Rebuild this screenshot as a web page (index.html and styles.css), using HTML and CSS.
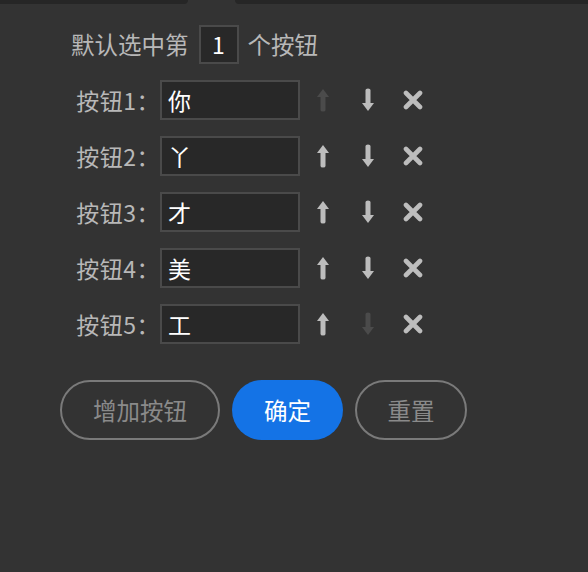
FILE: index.html
```
<!DOCTYPE html>
<html lang="zh-CN">
<head>
<meta charset="utf-8">
<title>按钮设置</title>
<link rel="stylesheet" href="styles.css">
</head>
<body>
<div class="topbar">
  <div class="tab tab-left"></div>
  <div class="tab tab-right"></div>
</div>
<div class="panel">
  <div class="default-row">
    <span>默认选中第</span>
    <span class="num-box">1</span>
    <span>个按钮</span>
  </div>
  <div class="rows">
    <div class="row">
      <span class="label">按钮1：</span>
      <span class="field">你</span>
      <span class="icon-btn disabled"><svg viewBox="0 0 12 24" width="12" height="24"><path d="M6 1 L12 9 L8.5 9 L8.5 22 Q8.5 23.5 6 23.5 Q3.5 23.5 3.5 22 L3.5 9 L0 9 Z" fill="currentColor"/></svg></span>
      <span class="icon-btn"><svg viewBox="0 0 12 24" width="12" height="24"><path d="M6 23 L12 15 L8.5 15 L8.5 2 Q8.5 0.5 6 0.5 Q3.5 0.5 3.5 2 L3.5 15 L0 15 Z" fill="currentColor"/></svg></span>
      <span class="icon-btn"><svg viewBox="0 0 20 20" width="20" height="20"><path d="M3 3 L17 17 M17 3 L3 17" stroke="currentColor" stroke-width="4.6" stroke-linecap="round"/></svg></span>
    </div>
    <div class="row">
      <span class="label">按钮2：</span>
      <span class="field">丫</span>
      <span class="icon-btn"><svg viewBox="0 0 12 24" width="12" height="24"><path d="M6 1 L12 9 L8.5 9 L8.5 22 Q8.5 23.5 6 23.5 Q3.5 23.5 3.5 22 L3.5 9 L0 9 Z" fill="currentColor"/></svg></span>
      <span class="icon-btn"><svg viewBox="0 0 12 24" width="12" height="24"><path d="M6 23 L12 15 L8.5 15 L8.5 2 Q8.5 0.5 6 0.5 Q3.5 0.5 3.5 2 L3.5 15 L0 15 Z" fill="currentColor"/></svg></span>
      <span class="icon-btn"><svg viewBox="0 0 20 20" width="20" height="20"><path d="M3 3 L17 17 M17 3 L3 17" stroke="currentColor" stroke-width="4.6" stroke-linecap="round"/></svg></span>
    </div>
    <div class="row">
      <span class="label">按钮3：</span>
      <span class="field">才</span>
      <span class="icon-btn"><svg viewBox="0 0 12 24" width="12" height="24"><path d="M6 1 L12 9 L8.5 9 L8.5 22 Q8.5 23.5 6 23.5 Q3.5 23.5 3.5 22 L3.5 9 L0 9 Z" fill="currentColor"/></svg></span>
      <span class="icon-btn"><svg viewBox="0 0 12 24" width="12" height="24"><path d="M6 23 L12 15 L8.5 15 L8.5 2 Q8.5 0.5 6 0.5 Q3.5 0.5 3.5 2 L3.5 15 L0 15 Z" fill="currentColor"/></svg></span>
      <span class="icon-btn"><svg viewBox="0 0 20 20" width="20" height="20"><path d="M3 3 L17 17 M17 3 L3 17" stroke="currentColor" stroke-width="4.6" stroke-linecap="round"/></svg></span>
    </div>
    <div class="row">
      <span class="label">按钮4：</span>
      <span class="field">美</span>
      <span class="icon-btn"><svg viewBox="0 0 12 24" width="12" height="24"><path d="M6 1 L12 9 L8.5 9 L8.5 22 Q8.5 23.5 6 23.5 Q3.5 23.5 3.5 22 L3.5 9 L0 9 Z" fill="currentColor"/></svg></span>
      <span class="icon-btn"><svg viewBox="0 0 12 24" width="12" height="24"><path d="M6 23 L12 15 L8.5 15 L8.5 2 Q8.5 0.5 6 0.5 Q3.5 0.5 3.5 2 L3.5 15 L0 15 Z" fill="currentColor"/></svg></span>
      <span class="icon-btn"><svg viewBox="0 0 20 20" width="20" height="20"><path d="M3 3 L17 17 M17 3 L3 17" stroke="currentColor" stroke-width="4.6" stroke-linecap="round"/></svg></span>
    </div>
    <div class="row">
      <span class="label">按钮5：</span>
      <span class="field">工</span>
      <span class="icon-btn"><svg viewBox="0 0 12 24" width="12" height="24"><path d="M6 1 L12 9 L8.5 9 L8.5 22 Q8.5 23.5 6 23.5 Q3.5 23.5 3.5 22 L3.5 9 L0 9 Z" fill="currentColor"/></svg></span>
      <span class="icon-btn disabled"><svg viewBox="0 0 12 24" width="12" height="24"><path d="M6 23 L12 15 L8.5 15 L8.5 2 Q8.5 0.5 6 0.5 Q3.5 0.5 3.5 2 L3.5 15 L0 15 Z" fill="currentColor"/></svg></span>
      <span class="icon-btn"><svg viewBox="0 0 20 20" width="20" height="20"><path d="M3 3 L17 17 M17 3 L3 17" stroke="currentColor" stroke-width="4.6" stroke-linecap="round"/></svg></span>
    </div>
  </div>
  <div class="actions">
    <button class="btn btn-outline btn-add">增加按钮</button>
    <button class="btn btn-primary">确定</button>
    <button class="btn btn-outline btn-reset">重置</button>
  </div>
</div>
</body>
</html>
```
FILE: styles.css
```
html, body {
  margin: 0;
  padding: 0;
  background: #333333;
  height: 100%;
}
body {
  font-family: "Noto Sans CJK SC", "Noto Sans", sans-serif;
  color: #b8b8b8;
}
.topbar {
  display: flex;
  gap: 47px;
  height: 4px;
}
.tab {
  height: 4px;
  background: #262626;
}
.tab-left {
  width: 188px;
  border-radius: 0 0 5px 0;
}
.tab-right {
  flex: 1;
  border-radius: 0 0 0 5px;
}
.panel {
  padding: 20px 0 0 60px;
}
.default-row {
  display: flex;
  align-items: center;
  gap: 10px;
  padding-left: 11px;
  font-size: 23.5px;
  height: 40px;
}
.num-box {
  width: 36px;
  height: 35px;
  border: 2px solid #4a4a4a;
  background: #282828;
  color: #ffffff;
  display: flex;
  align-items: center;
  justify-content: center;
  font-size: 23px;
  margin-right: -1px;
}
.rows {
  display: flex;
  flex-direction: column;
  gap: 16px;
  margin-top: 16px;
}
.row {
  display: flex;
  align-items: center;
  height: 40px;
}
.label {
  width: 100px;
  text-align: right;
  font-size: 23px;
  letter-spacing: 0.5px;
}
.field {
  box-sizing: border-box;
  width: 140px;
  height: 40px;
  border: 2px solid #4a4a4a;
  background: #282828;
  color: #ffffff;
  font-size: 23px;
  padding-left: 6px;
  display: flex;
  align-items: center;
}
.icon-btn {
  width: 45px;
  height: 40px;
  display: flex;
  align-items: center;
  justify-content: center;
  color: #bdbdbd;
}
.icon-btn.disabled {
  color: #4b4b4b;
}
.actions {
  display: flex;
  gap: 12px;
  margin-top: 36px;
}
.btn {
  box-sizing: border-box;
  height: 60px;
  border-radius: 30px;
  font-family: "Noto Sans CJK SC", "Noto Sans", sans-serif;
  font-size: 23.5px;
  padding: 0;
  cursor: pointer;
}
.btn-outline {
  background: transparent;
  border: 2px solid #7a7a7a;
  color: #8a8a8a;
}
.btn-add {
  width: 160px;
}
.btn-reset {
  width: 112px;
}
.btn-primary {
  width: 111px;
  border: none;
  background: #1473e6;
  color: #ffffff;
}
```
